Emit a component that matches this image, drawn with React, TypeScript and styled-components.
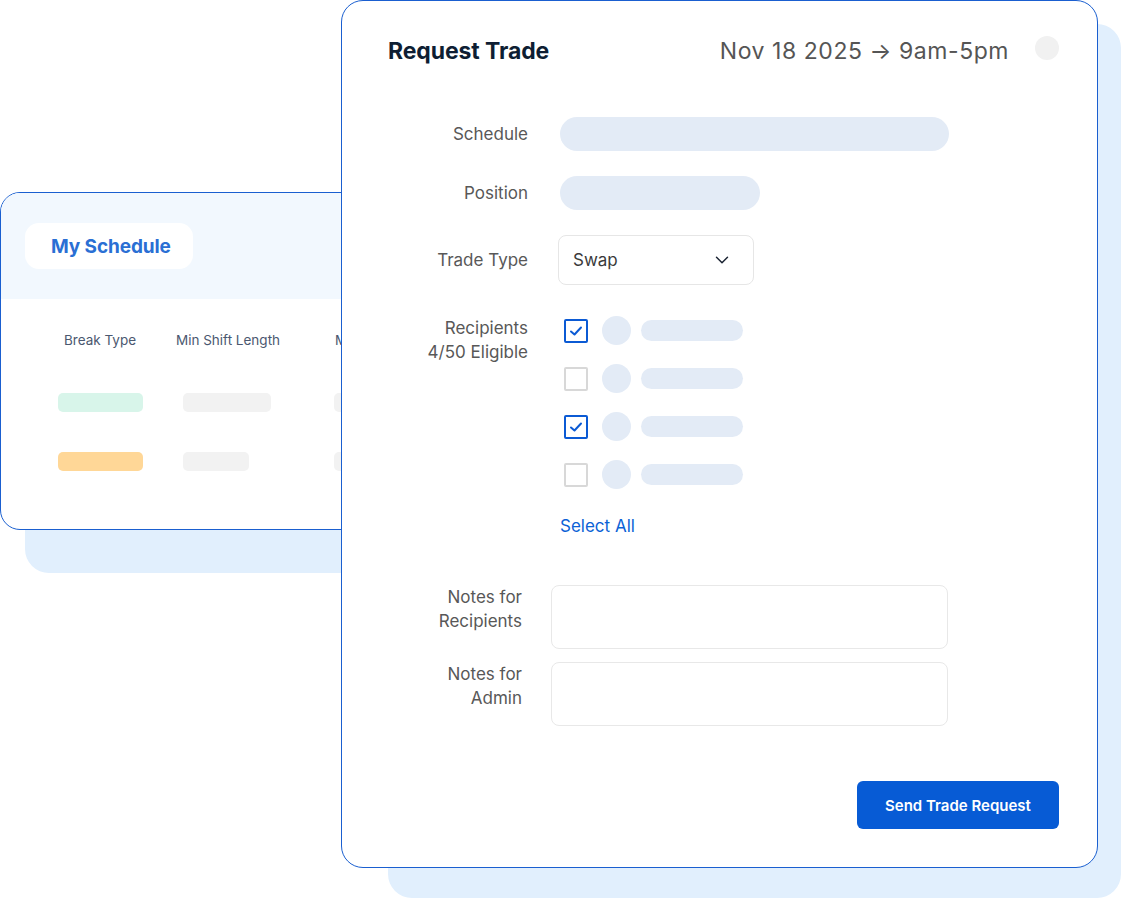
import styled, { createGlobalStyle } from 'styled-components';
import { ChevronDown } from 'lucide-react';

const GlobalStyle = createGlobalStyle`
  html, body {
    margin: 0;
    padding: 0;
    background: #ffffff;
  }
  body {
    font-family: Inter, "Noto Sans", "Liberation Sans", sans-serif;
    -webkit-font-smoothing: antialiased;
  }
  * {
    box-sizing: border-box;
  }
`;

const Canvas = styled.div`
  position: relative;
  width: 1121px;
  height: 899px;
  overflow: hidden;
  background: #ffffff;
`;

const Backdrop = styled.div<{ left: number; top: number; width: number; height: number }>`
  position: absolute;
  left: ${p => p.left}px;
  top: ${p => p.top}px;
  width: ${p => p.width}px;
  height: ${p => p.height}px;
  background: #e1effd;
  border-radius: 24px;
`;

/* ---------- back card: My Schedule ---------- */

const ScheduleCard = styled.div`
  position: absolute;
  left: 0;
  top: 192px;
  width: 420px;
  height: 338px;
  background: #ffffff;
  border: 1px solid #1a5fd0;
  border-radius: 20px;
  overflow: hidden;
  display: flex;
  flex-direction: column;
`;

const ScheduleHeader = styled.div`
  height: 106px;
  background: #f2f8fe;
  padding: 30px 0 0 24px;
`;

const TabPill = styled.div`
  display: inline-flex;
  align-items: center;
  width: 168px;
  height: 46px;
  padding: 0 0 0 26px;
  background: #ffffff;
  border-radius: 14px;
  color: #2a6fd4;
  font-size: 19px;
  font-weight: 700;
  letter-spacing: -0.1px;
`;

const Table = styled.div`
  display: grid;
  grid-template-columns: 128px 128px 1fr;
  padding: 32px 0 0 35px;
`;

const HeadCell = styled.div<{ start?: boolean }>`
  justify-self: ${p => (p.start ? 'start' : 'center')};
  margin-left: ${p => (p.start ? '43px' : '0')};
  font-size: 13.5px;
  line-height: 18px;
  color: #4b5870;
  white-space: nowrap;
  margin-bottom: 44px;
`;

const Pill = styled.div<{ w: number; color: string; offset?: number; last?: boolean }>`
  justify-self: ${p => (p.offset !== undefined ? 'start' : 'center')};
  margin-left: ${p => p.offset ?? 0}px;
  width: ${p => p.w}px;
  height: 19px;
  border-radius: 5px;
  background: ${p => p.color};
  margin-bottom: ${p => (p.last ? '0' : '40px')};
`;

/* ---------- front card: Request Trade ---------- */

const TradeCard = styled.div`
  position: absolute;
  left: 341px;
  top: 0;
  width: 757px;
  height: 868px;
  background: #ffffff;
  border: 1px solid #1a5fd0;
  border-radius: 22px;
  padding: 35px 38px 0 0;
  display: flex;
  flex-direction: column;
`;

const CardHeader = styled.div`
  display: flex;
  align-items: center;
  padding-left: 46px;
  height: 30px;
`;

const Title = styled.h1`
  margin: 0;
  font-size: 23px;
  font-weight: 700;
  color: #0e1e33;
  flex: 1;
  letter-spacing: -0.1px;
`;

const DateRange = styled.div`
  font-size: 23px;
  color: #555555;
  letter-spacing: 0.55px;
`;

const Dot = styled.div`
  width: 24px;
  height: 24px;
  border-radius: 50%;
  background: #f1f1f1;
  margin-left: 26px;
  margin-top: -6px;
`;

const FieldRow = styled.div<{ mt: number; labelW?: number; gap?: number }>`
  display: grid;
  grid-template-columns: ${p => p.labelW ?? 186}px 1fr;
  column-gap: ${p => p.gap ?? 30}px;
  align-items: center;
  margin-top: ${p => p.mt}px;
`;

const Label = styled.div<{ top?: boolean }>`
  text-align: right;
  font-size: 17px;
  line-height: 24px;
  color: #585858;
  align-self: ${p => (p.top ? 'start' : 'center')};
`;

const Placeholder = styled.div<{ w: number }>`
  width: ${p => p.w}px;
  height: 34px;
  border-radius: 17px;
  background: #e3ebf6;
  margin-left: 2px;
`;

const Select = styled.div`
  width: 196px;
  height: 50px;
  border: 1px solid #e6e6e6;
  border-radius: 8px;
  display: flex;
  align-items: center;
  justify-content: space-between;
  padding: 0 20px 0 14px;
  font-size: 17px;
  color: #3a3a3a;
  svg {
    color: #1a2332;
  }
`;

const RecipientList = styled.div`
  display: flex;
  flex-direction: column;
  gap: 19px;
`;

const Recipient = styled.div`
  display: flex;
  align-items: center;
  height: 29px;
  padding-left: 6px;
`;

const Checkbox = styled.div<{ checked: boolean }>`
  width: 24px;
  height: 24px;
  border: 2px solid ${p => (p.checked ? '#0b5ad4' : '#d8d8d8')};
  border-radius: 2px;
  display: flex;
  align-items: center;
  justify-content: center;
  margin-top: 1px;
`;

const Avatar = styled.div`
  width: 29px;
  height: 29px;
  border-radius: 50%;
  background: #e3ebf6;
  margin-left: 14px;
`;

const NameBar = styled.div`
  width: 102px;
  height: 21px;
  border-radius: 11px;
  background: #e3ebf6;
  margin-left: 10px;
`;

const SelectAll = styled.div`
  margin-top: 25px;
  padding-left: 2px;
  font-size: 17px;
  line-height: 24px;
  color: #0b62d6;
`;

const NoteBox = styled.div`
  width: 397px;
  height: 64px;
  border: 1px solid #e8e8e8;
  border-radius: 8px;
`;

const Footer = styled.div`
  display: flex;
  justify-content: flex-end;
  margin-top: 55px;
`;

const PrimaryButton = styled.button`
  width: 202px;
  height: 48px;
  border: none;
  border-radius: 6px;
  background: #075bd5;
  color: #ffffff;
  font-family: Inter, "Noto Sans", sans-serif;
  font-size: 15px;
  font-weight: 600;
  cursor: pointer;
`;

const CheckMark = () => (
  <svg width="14" height="12" viewBox="0 0 14 12" fill="none">
    <polyline points="2,6.5 5.5,9.5 12,2.5" stroke="#0b5ad4" strokeWidth="2" strokeLinecap="round" strokeLinejoin="round" />
  </svg>
);

const recipients = [true, false, true, false];

export default function App() {
  return (
    <>
      <GlobalStyle />
      <Canvas>
        <Backdrop left={25} top={230} width={400} height={343} />
        <ScheduleCard>
          <ScheduleHeader>
            <TabPill>My Schedule</TabPill>
          </ScheduleHeader>
          <Table>
            <HeadCell>Break Type</HeadCell>
            <HeadCell>Min Shift Length</HeadCell>
            <HeadCell start>Max Length</HeadCell>
            <Pill w={85} color="#d8f5ea" />
            <Pill w={88} color="#f2f2f2" offset={19} />
            <Pill w={60} color="#f2f2f2" offset={42} />
            <Pill w={85} color="#ffd797" last />
            <Pill w={66} color="#f2f2f2" offset={19} last />
            <Pill w={60} color="#f2f2f2" offset={42} last />
          </Table>
        </ScheduleCard>

        <Backdrop left={388} top={24} width={733} height={874} />
        <TradeCard>
          <CardHeader>
            <Title>Request Trade</Title>
            <DateRange>Nov 18 2025 → 9am-5pm</DateRange>
            <Dot />
          </CardHeader>

          <FieldRow mt={51}>
            <Label>Schedule</Label>
            <Placeholder w={389} />
          </FieldRow>
          <FieldRow mt={25}>
            <Label>Position</Label>
            <Placeholder w={200} />
          </FieldRow>
          <FieldRow mt={25}>
            <Label>Trade Type</Label>
            <Select>
              <span>Swap</span>
              <ChevronDown size={22} strokeWidth={1.6} />
            </Select>
          </FieldRow>
          <FieldRow mt={31}>
            <Label top>
              Recipients
              <br />
              4/50 Eligible
            </Label>
            <div>
              <RecipientList>
                {recipients.map((checked, i) => (
                  <Recipient key={i}>
                    <Checkbox checked={checked}>{checked && <CheckMark />}</Checkbox>
                    <Avatar />
                    <NameBar />
                  </Recipient>
                ))}
              </RecipientList>
              <SelectAll>Select All</SelectAll>
            </div>
          </FieldRow>

          <FieldRow mt={47} labelW={180} gap={29}>
            <Label top>
              Notes for
              <br />
              Recipients
            </Label>
            <NoteBox />
          </FieldRow>
          <FieldRow mt={13} labelW={180} gap={29}>
            <Label top>
              Notes for
              <br />
              Admin
            </Label>
            <NoteBox />
          </FieldRow>

          <Footer>
            <PrimaryButton>Send Trade Request</PrimaryButton>
          </Footer>
        </TradeCard>
      </Canvas>
    </>
  );
}
